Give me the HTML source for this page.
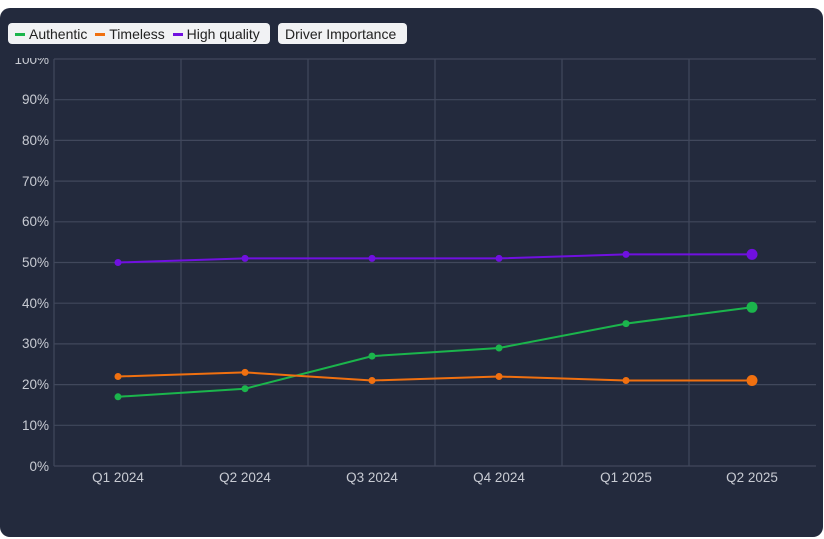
<!DOCTYPE html>
<html><head><style>
body{margin:0;width:824px;height:539px;background:#fff;overflow:hidden;font-family:"Liberation Sans",sans-serif}
.card{position:absolute;left:0;top:8px;width:823px;height:529px;background:#232a3d;border-radius:10px}
.leg{position:absolute;top:23px;height:21px;background:#f1f2f4;border-radius:4px;font-size:14px;color:#222;line-height:22px;white-space:nowrap;box-sizing:border-box;padding-left:7px}
.leg i{display:inline-block;width:10px;height:3px;vertical-align:middle;margin:0 4px 2px 0}
</style></head><body>
<div class="card"></div>
<svg width="824" height="539" style="position:absolute;left:0;top:0" font-family="Liberation Sans, sans-serif" font-size="13.5" fill="#c8cbd3">
<g stroke="#41485c" stroke-width="1.2">
<line x1="54" y1="59" x2="816" y2="59"/><line x1="54" y1="99.7" x2="816" y2="99.7"/><line x1="54" y1="140.4" x2="816" y2="140.4"/><line x1="54" y1="181.1" x2="816" y2="181.1"/><line x1="54" y1="221.8" x2="816" y2="221.8"/><line x1="54" y1="262.5" x2="816" y2="262.5"/><line x1="54" y1="303.2" x2="816" y2="303.2"/><line x1="54" y1="343.9" x2="816" y2="343.9"/><line x1="54" y1="384.6" x2="816" y2="384.6"/><line x1="54" y1="425.3" x2="816" y2="425.3"/><line x1="54" y1="466" x2="816" y2="466"/>
<line x1="54" y1="59" x2="54" y2="466"/><line x1="181" y1="59" x2="181" y2="466"/><line x1="308" y1="59" x2="308" y2="466"/><line x1="435" y1="59" x2="435" y2="466"/><line x1="562" y1="59" x2="562" y2="466"/><line x1="689" y1="59" x2="689" y2="466"/>
</g>
<g text-anchor="end">
<text x="49" y="64">100%</text><text x="49" y="104">90%</text><text x="49" y="145">80%</text><text x="49" y="186">70%</text><text x="49" y="226">60%</text><text x="49" y="267">50%</text><text x="49" y="308">40%</text><text x="49" y="348">30%</text><text x="49" y="389">20%</text><text x="49" y="430">10%</text><text x="49" y="471">0%</text>
</g>
<rect x="10" y="46" width="44" height="12" fill="#232a3d"/>
<g text-anchor="middle">
<text x="118" y="482">Q1 2024</text><text x="245" y="482">Q2 2024</text><text x="372" y="482">Q3 2024</text><text x="499" y="482">Q4 2024</text><text x="626" y="482">Q1 2025</text><text x="752" y="482">Q2 2025</text>
</g>
<polyline fill="none" stroke="#7010e0" stroke-width="2" points="118,262.5 245,258.4 372,258.4 499,258.4 626,254.4 752,254.4"/>
<g fill="#7010e0"><circle cx="118" cy="262.5" r="3.5"/><circle cx="245" cy="258.4" r="3.5"/><circle cx="372" cy="258.4" r="3.5"/><circle cx="499" cy="258.4" r="3.5"/><circle cx="626" cy="254.4" r="3.5"/><circle cx="752" cy="254.4" r="5.5"/></g>
<polyline fill="none" stroke="#1bb54c" stroke-width="2" points="118,396.8 245,388.7 372,356.1 499,348 626,323.6 752,307.3"/>
<g fill="#1bb54c"><circle cx="118" cy="396.8" r="3.5"/><circle cx="245" cy="388.7" r="3.5"/><circle cx="372" cy="356.1" r="3.5"/><circle cx="499" cy="348" r="3.5"/><circle cx="626" cy="323.6" r="3.5"/><circle cx="752" cy="307.3" r="5.5"/></g>
<polyline fill="none" stroke="#f07010" stroke-width="2" points="118,376.5 245,372.4 372,380.5 499,376.5 626,380.5 752,380.5"/>
<g fill="#f07010"><circle cx="118" cy="376.5" r="3.5"/><circle cx="245" cy="372.4" r="3.5"/><circle cx="372" cy="380.5" r="3.5"/><circle cx="499" cy="376.5" r="3.5"/><circle cx="626" cy="380.5" r="3.5"/><circle cx="752" cy="380.5" r="5.5"/></g>
</svg>
<div class="leg" style="left:8px;width:262px"><i style="background:#1bb54c"></i>Authentic <i style="background:#f07010;margin-left:4px"></i>Timeless <i style="background:#7010e0;margin-left:4px"></i>High quality</div>
<div class="leg" style="left:278px;width:129px">Driver Importance</div>
</body></html>
